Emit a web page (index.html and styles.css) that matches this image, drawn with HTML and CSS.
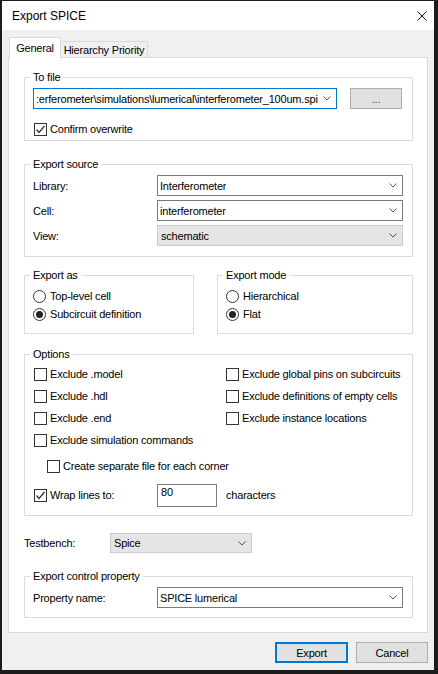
FILE: index.html
```html
<!DOCTYPE html>
<html>
<head>
<title>Export SPICE</title>
<link rel="stylesheet" href="styles.css">
</head>
<body>
<div class="window">
  <div class="titlebar">
    <span class="title">Export SPICE</span>
    <svg class="close" width="10" height="10" viewBox="0 0 10 10"><path d="M0.5 0.5L9.5 9.5M9.5 0.5L0.5 9.5" stroke="#111" stroke-width="1" fill="none"/></svg>
  </div>

  <div class="tabs">
    <div class="tab tab-active">General</div>
    <div class="tab tab-other">Hierarchy Priority</div>
  </div>

  <div class="panel">
    <fieldset class="group group-file">
      <legend>To file</legend>
      <div class="file-row">
        <div class="combo combo-focus combo-file">
          <span class="combo-text">:erferometer\simulations\lumerical\interferometer_100um.spi</span>
          <svg class="chev" width="8" height="5" viewBox="0 0 8 5"><polyline points="0.5,0.5 4,4 7.5,0.5" stroke="#555" fill="none"/></svg>
        </div>
        <div class="btn btn-browse">...</div>
      </div>
      <div class="check-row file-confirm">
        <span class="box"><svg width="11" height="11" viewBox="0 0 11 11"><polyline points="1.5,5.5 4,8.5 9.5,2" stroke="#333" stroke-width="1.3" fill="none"/></svg></span>
        Confirm overwrite
      </div>
    </fieldset>

    <fieldset class="group group-source">
      <legend>Export source</legend>
      <div class="field-row">
        <span class="field-label">Library:</span>
        <div class="combo combo-wide">
          <span class="combo-text">Interferometer</span>
          <svg class="chev" width="8" height="5" viewBox="0 0 8 5"><polyline points="0.5,0.5 4,4 7.5,0.5" stroke="#555" fill="none"/></svg>
        </div>
      </div>
      <div class="field-row">
        <span class="field-label">Cell:</span>
        <div class="combo combo-wide">
          <span class="combo-text">interferometer</span>
          <svg class="chev" width="8" height="5" viewBox="0 0 8 5"><polyline points="0.5,0.5 4,4 7.5,0.5" stroke="#555" fill="none"/></svg>
        </div>
      </div>
      <div class="field-row">
        <span class="field-label">View:</span>
        <div class="combo combo-list combo-wide">
          <span class="combo-text">schematic</span>
          <svg class="chev" width="8" height="5" viewBox="0 0 8 5"><polyline points="0.5,0.5 4,4 7.5,0.5" stroke="#555" fill="none"/></svg>
        </div>
      </div>
    </fieldset>

    <div class="pair">
      <fieldset class="group group-as">
        <legend>Export as</legend>
        <div class="radio-row"><span class="radio"></span>Top-level cell</div>
        <div class="radio-row"><span class="radio on"></span>Subcircuit definition</div>
      </fieldset>
      <fieldset class="group group-mode">
        <legend>Export mode</legend>
        <div class="radio-row"><span class="radio"></span>Hierarchical</div>
        <div class="radio-row"><span class="radio on"></span>Flat</div>
      </fieldset>
    </div>

    <fieldset class="group group-options">
      <legend>Options</legend>
      <div class="option-grid">
        <div class="check-row"><span class="box"></span>Exclude .model</div>
        <div class="check-row"><span class="box"></span>Exclude global pins on subcircuits</div>
        <div class="check-row"><span class="box"></span>Exclude .hdl</div>
        <div class="check-row"><span class="box"></span>Exclude definitions of empty cells</div>
        <div class="check-row"><span class="box"></span>Exclude .end</div>
        <div class="check-row"><span class="box"></span>Exclude instance locations</div>
        <div class="check-row"><span class="box"></span>Exclude simulation commands</div>
      </div>
      <div class="check-row check-indent"><span class="box"></span>Create separate file for each corner</div>
      <div class="wrap-row">
        <div class="check-row wrap-check">
          <span class="box"><svg width="11" height="11" viewBox="0 0 11 11"><polyline points="1.5,5.5 4,8.5 9.5,2" stroke="#333" stroke-width="1.3" fill="none"/></svg></span>
          Wrap lines to:
        </div>
        <div class="text-input">80</div>
        <span class="wrap-unit">characters</span>
      </div>
    </fieldset>

    <div class="bench-row">
      <span class="bench-label">Testbench:</span>
      <div class="combo combo-list combo-bench">
        <span class="combo-text">Spice</span>
        <svg class="chev" width="8" height="5" viewBox="0 0 8 5"><polyline points="0.5,0.5 4,4 7.5,0.5" stroke="#555" fill="none"/></svg>
      </div>
    </div>

    <fieldset class="group group-control">
      <legend>Export control property</legend>
      <div class="field-row">
        <span class="field-label">Property name:</span>
        <div class="combo combo-wide">
          <span class="combo-text">SPICE lumerical</span>
          <svg class="chev" width="8" height="5" viewBox="0 0 8 5"><polyline points="0.5,0.5 4,4 7.5,0.5" stroke="#555" fill="none"/></svg>
        </div>
      </div>
    </fieldset>
  </div>

  <div class="footer">
    <div class="btn btn-default">Export</div>
    <div class="btn btn-cancel">Cancel</div>
  </div>
</div>
</body>
</html>
```

FILE: styles.css
```css
body {
  margin: 0;
  font-family: "Liberation Sans", Arial, sans-serif;
  font-size: 11px;
  letter-spacing: -0.2px;
  color: #000;
  background: #fff;
}

.window {
  width: 438px;
  height: 674px;
  box-sizing: border-box;
  border: 1px solid #1c1c1c;
  border-left-width: 2px;
  border-right-width: 4px;
  border-bottom-width: 4px;
  background: #f0f0f0;
  display: flex;
  flex-direction: column;
}

.titlebar {
  height: 29px;
  flex: none;
  background: #fff;
  display: flex;
  align-items: center;
  justify-content: space-between;
  padding: 0 7px 0 10px;
}
.title { font-size: 12px; letter-spacing: 0; }

/* tabs */
.tabs {
  display: flex;
  align-items: flex-end;
  height: 20px;
  margin: 7px 0 0 7px;
}
.tab {
  box-sizing: border-box;
  border: 1px solid #d9d9d9;
  border-bottom: none;
  display: flex;
  align-items: center;
  justify-content: center;
}
.tab-active {
  position: relative;
  z-index: 1;
  width: 52px;
  height: 21px;
  margin-bottom: -1px;
  background: #fff;
}
.tab-other {
  width: 87px;
  height: 16px;
  border-left: none;
  background: #f0f0f0;
}

.panel {
  box-sizing: border-box;
  height: 576px;
  flex: none;
  margin: 0 6px;
  background: #fff;
  border: 1px solid #d9d9d9;
  padding: 12px 14px 0 15px;
}

/* group boxes */
.group {
  margin: 0;
  border: 1px solid #dcdcdc;
  padding: 4px 9px 0 8px;
  min-width: 0;
}
.group legend {
  padding: 0 3px;
  margin-left: -3px;
  line-height: 14px;
}
.group-file { padding-bottom: 1px; }
.group-source { margin-top: 16px; padding-bottom: 10px; }
.group-options { margin-top: 13px; padding-top: 2px; padding-bottom: 8px; }
.group-control { margin-top: 16px; padding-top: 4px; padding-bottom: 9px; }

.pair {
  display: flex;
  gap: 23px;
  margin-top: 11px;
}
.group-as { width: 170px; box-sizing: border-box; padding-top: 5px; padding-bottom: 10px; }
.group-mode { flex: 1; padding-top: 5px; padding-bottom: 10px; }

/* combos and buttons */
.combo {
  box-sizing: border-box;
  height: 21px;
  border: 1px solid #7a7a7a;
  background: #fff;
  display: flex;
  align-items: center;
  justify-content: space-between;
  padding: 0 5px 0 2px;
  overflow: hidden;
}
.combo-text { white-space: nowrap; overflow: hidden; }
.chev { flex: none; margin-left: 4px; }
.combo-focus { border-color: #0078d7; }
.combo-list { background: #e5e5e5; border-color: #cccccc; padding-left: 3px; }
.combo-file { width: 304px; }
.combo-wide { flex: 1; }
.combo-bench { width: 142px; height: 20px; }

.btn {
  box-sizing: border-box;
  height: 21px;
  background: #e1e1e1;
  border: 1px solid #adadad;
  display: flex;
  align-items: center;
  justify-content: center;
}
.btn-browse { width: 52px; color: #444; }

.file-row {
  display: flex;
  gap: 13px;
}
.file-confirm { margin-top: 10px; }

.field-row {
  display: flex;
  align-items: center;
  height: 21px;
  margin-bottom: 4px;
}
.field-row:last-child { margin-bottom: 0; }
.field-label { width: 124px; flex: none; }

/* checks and radios */
.check-row {
  display: flex;
  align-items: center;
  gap: 3px;
  height: 20px;
  margin-left: 1px;
}
.box {
  width: 13px;
  height: 13px;
  box-sizing: border-box;
  border: 1px solid #333;
  background: #fff;
  flex: none;
  display: flex;
}
.radio-row {
  display: flex;
  align-items: center;
  gap: 4px;
  height: 18px;
}
.radio {
  width: 13px;
  height: 13px;
  box-sizing: border-box;
  border: 1px solid #333;
  border-radius: 50%;
  background: #fff;
  flex: none;
  display: flex;
  align-items: center;
  justify-content: center;
}
.radio.on::after {
  content: "";
  width: 7px;
  height: 7px;
  border-radius: 50%;
  background: #222;
}

.option-grid {
  display: grid;
  grid-template-columns: 192px 1fr;
  grid-auto-rows: 22px;
}
.option-grid .check-row { height: 22px; }
.check-indent { margin-top: 4px; margin-left: 14px; height: 22px; }

.wrap-row {
  display: flex;
  align-items: center;
  height: 24px;
  margin-top: 6px;
}
.wrap-check { width: 123px; }
.text-input {
  box-sizing: border-box;
  width: 60px;
  height: 23px;
  border: 1px solid #7a7a7a;
  background: #fff;
  padding: 1px 3px;
}
.wrap-unit { margin-left: 9px; }

.bench-row {
  display: flex;
  align-items: center;
  margin-top: 17px;
}
.bench-label { width: 86px; }

.footer {
  display: flex;
  justify-content: flex-end;
  gap: 8px;
  margin: 9px 6px 0 0;
}
.btn-default { width: 73px; border: 2px solid #0078d7; }
.btn-cancel { width: 72px; }
```
